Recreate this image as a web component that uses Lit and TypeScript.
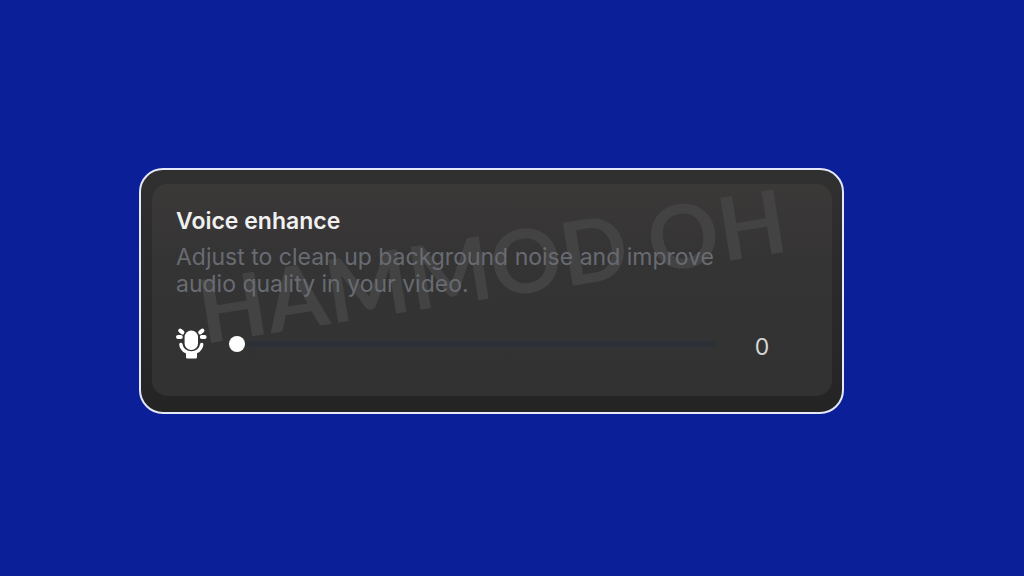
import { LitElement, html, css } from "lit";
import { customElement, state } from "lit/decorators.js";

@customElement("app-root")
export class AppRoot extends LitElement {
  @state() private level = 0;

  static styles = css`
    :host {
      display: block;
      box-sizing: border-box;
      min-height: 100vh;
      padding: 168px 180px 32px 139px;
      background: #0b2098;
      font-family: Inter, "Noto Sans", sans-serif;
    }
    .card {
      padding: 14px 10px 16px 11px;
      border: 2px solid #e4e8f8;
      border-radius: 24px;
      background: linear-gradient(#303030, #242424);
    }
    .panel {
      position: relative;
      display: grid;
      grid-template-columns: 53px 1fr 76px;
      padding: 23px 32px 35px 24px;
      border-radius: 16px;
      background: linear-gradient(#3b3838, #353434 35%, #323232);
    }
    .watermark {
      position: absolute;
      left: 43px;
      top: 36px;
      color: #444343;
      font: 700 88px/88px Lato, sans-serif;
      white-space: nowrap;
      transform: rotate(-9deg);
      user-select: none;
      pointer-events: none;
    }
    .title,
    .hint {
      position: relative;
      grid-column: 1 / 3;
      margin: 0;
    }
    .title {
      color: #f0f0f0;
      font-size: 23px;
      font-weight: 600;
      line-height: 28px;
    }
    .hint {
      margin-top: 9px;
      color: #686b72;
      font-size: 23px;
      line-height: 27px;
    }
    .icon,
    .slider,
    .value {
      position: relative;
      margin-top: 29px;
      height: 34px;
    }
    .icon {
      grid-column: 1;
      display: block;
      width: 32px;
      fill: #fff;
      stroke: #fff;
    }
    .slider {
      appearance: none;
      width: auto;
      margin-right: 8px;
      margin-bottom: 0;
      margin-left: 0;
      background: transparent;
    }
    .slider::-webkit-slider-runnable-track {
      height: 6px;
      border-radius: 3px;
      background: linear-gradient(90deg, transparent 8px, #2e3038 8px);
    }
    .slider::-webkit-slider-thumb {
      appearance: none;
      width: 16px;
      height: 16px;
      margin-top: -5px;
      border-radius: 50%;
      background: #fff;
    }
    .value {
      color: #d6d6d6;
      font-size: 23px;
      line-height: 40px;
      text-align: center;
    }
  `;

  private onInput(e: Event) {
    this.level = Number((e.target as HTMLInputElement).value);
  }

  render() {
    return html`
      <main class="card">
        <section class="panel" aria-labelledby="title">
          <span class="watermark" aria-hidden="true">HAMMOD OH</span>
          <h1 class="title"><label id="title" for="level">Voice enhance</label></h1>
          <p class="hint" id="hint">
            Adjust to clean up background noise and improve audio quality in your video.
          </p>
          <svg class="icon" viewBox="0 0 32 34" aria-hidden="true">
            <rect x="8.6" y="3.6" width="13.4" height="19.4" rx="6.6" stroke="none" />
            <path
              d="M4.9 17.4C5.4 22.5 10 26 15.3 26S25.2 22.5 25.7 17.4"
              fill="none"
              stroke-width="3.4"
              stroke-linecap="round"
            />
            <path d="M10 25h11v5.2q0 1.3-1.3 1.3h-8.4q-1.3 0-1.3-1.3z" stroke="none" />
            <path
              d="M2 10h2.8M25.8 10h2.8M4.2 3.6l2.2 1.8M26.4 3.6l-2.2 1.8"
              fill="none"
              stroke-width="4"
              stroke-linecap="round"
            />
          </svg>
          <input
            class="slider"
            id="level"
            type="range"
            min="0"
            max="100"
            .value=${String(this.level)}
            aria-describedby="hint"
            @input=${this.onInput}
          />
          <output class="value" for="level">${this.level}</output>
        </section>
      </main>
    `;
  }
}
